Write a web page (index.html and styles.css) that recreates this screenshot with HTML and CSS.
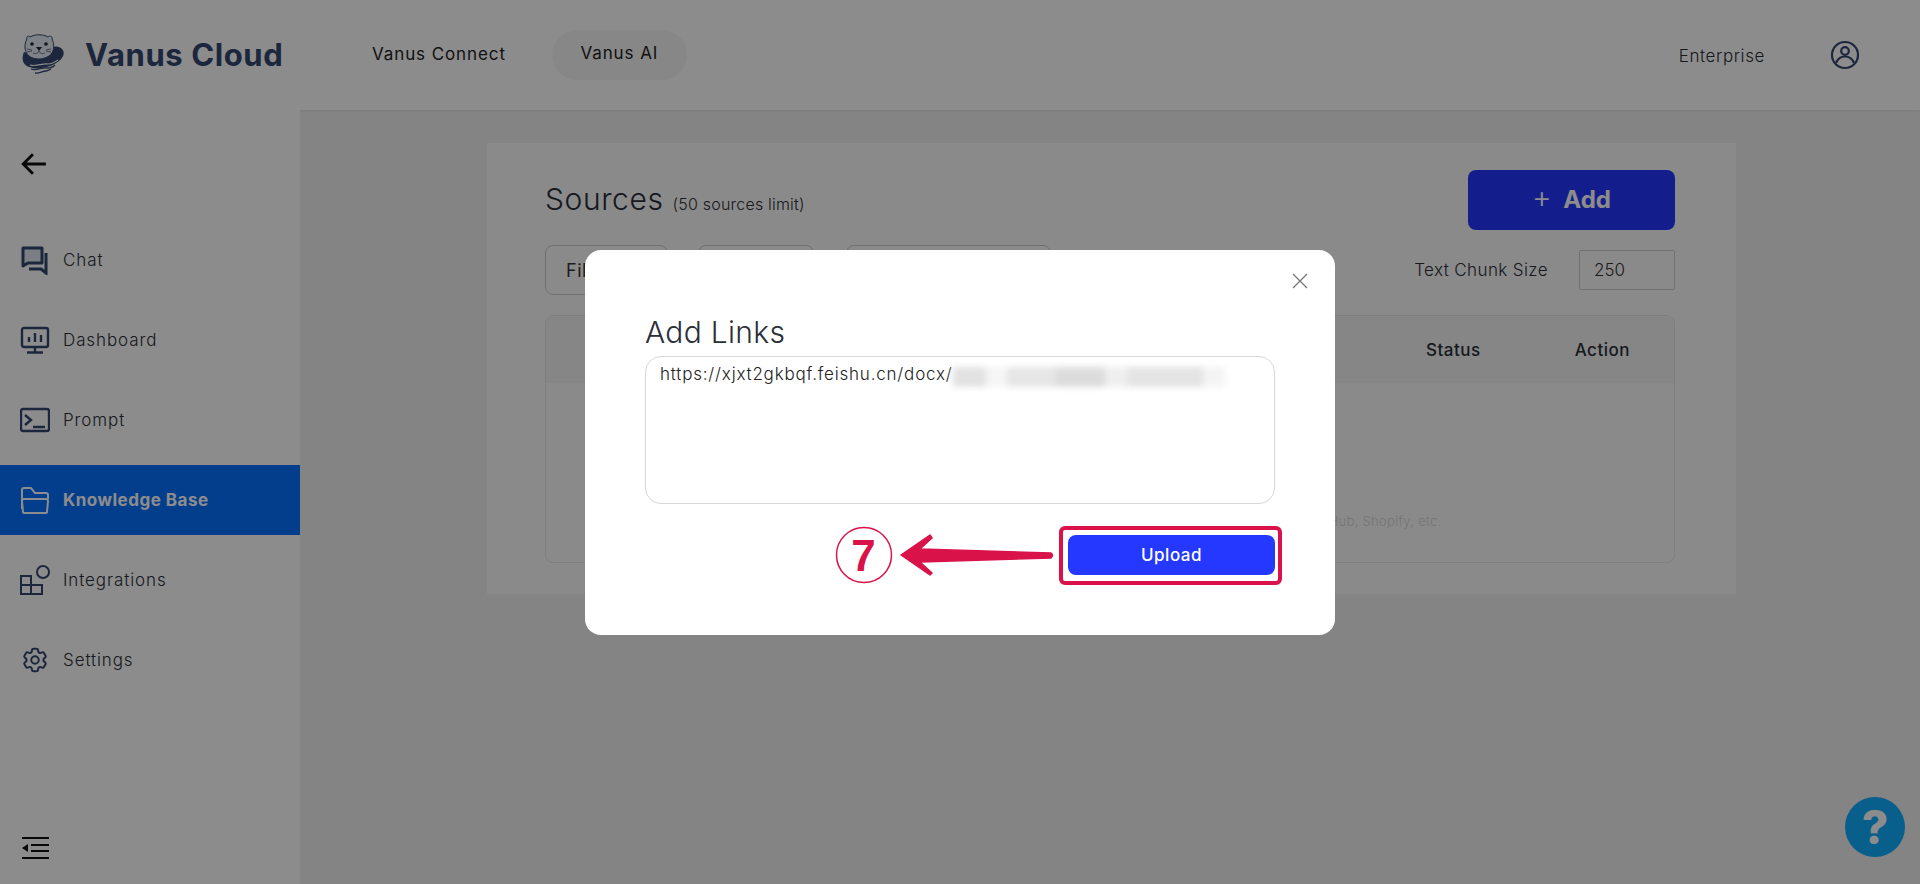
FILE: index.html
```html
<!DOCTYPE html>
<html>
    <head>
        <title>Vanus Cloud</title>
        <link rel="stylesheet" href="styles.css">
    </head>
    <body>
        <header class="topbar">
            <div class="brand">
                <svg class="otter" viewBox="0 0 44 40" width="44" height="40">
                    <path d="M3 18c-3 7-1 13 5 15 10 3 23 0 30-6 5-4 6-9 3-12-2-2-5-3-8-2L18 22z" fill="#33476f"/>
                    <path d="M6 5C5 3 7 1 9 3c5-3 13-3 18 0 2-2 5 0 4 2 3 6 2 14-3 17-6 4-15 4-20 0C3 18 3 10 6 5z" fill="#e6ebf2" stroke="#33476f" stroke-width="1"/>
                    <circle cx="11" cy="10" r="1.800" fill="#1c2740"/>
                    <circle cx="25" cy="10" r="1.800" fill="#1c2740"/>
                    <path d="M15 13h6l-3 4z" fill="#1c2740"/>
                    <path d="M18 17c-1 3-4 3-6 2m6-2c1 3 4 3 6 2M6 15l5 1M6 18l5-1M30 15l-5 1M30 18l-5-1" fill="none" stroke="#33476f" stroke-width=".7"/>
                    <path d="M9 31c7 2 12-2 18-1 4 0 7-2 10-4" fill="none" stroke="#fff" stroke-width="1.200"/>
                    <path d="M10 35c6 2 11-2 16-1 3 0 6-1 8-3M14 39c4 1 7-2 11-2 2 0 3-1 5-2" fill="none" stroke="#33476f" stroke-width="1.300"/>
                </svg>
                <span class="brand-name">Vanus Cloud</span>
            </div>
            <nav class="topnav">
                <a class="topnav-item">Vanus Connect</a>
                <a class="topnav-item topnav-active">Vanus AI</a>
            </nav>
            <div class="account">
                <span class="plan">Enterprise</span>
                <svg viewBox="0 0 30 30" width="30" height="30" fill="none" stroke="#33476f" stroke-width="2.200">
                    <circle cx="15" cy="15" r="13"/>
                    <circle cx="15" cy="11" r="3.800"/>
                    <path d="M6 23c2-5 5-6.500 9-6.500s7 1.500 9 6.500"/>
                </svg>
            </div>
        </header>

        <div class="layout">
            <aside class="sidebar">
                <div class="back">
                    <svg viewBox="0 0 24 24" width="26" height="26" fill="none" stroke="#111" stroke-width="2.600">
                        <path d="M23 12H2M11 3l-9 9 9 9"/>
                    </svg>
                </div>
                <ul class="menu">
                    <li class="menu-item">
                        <svg class="menu-icon" viewBox="0 0 30 30">
                            <path d="M3 3h19v15H8l-5 3z" fill="#dfe6f2" stroke="#33476f" stroke-width="3" stroke-linejoin="round"/>
                            <path d="M26 8v20l-5-4H9" fill="none" stroke="#33476f" stroke-width="3"/>
                        </svg>
                        Chat
                    </li>
                    <li class="menu-item">
                        <svg class="menu-icon" viewBox="0 0 30 30" fill="none" stroke="#33476f" stroke-width="2.400">
                            <rect x="2" y="3" width="26" height="19" rx="2"/>
                            <path d="M15 22v5M7 27.500h16M9 17v-5M15 17V8M21 17v-7"/>
                        </svg>
                        Dashboard
                    </li>
                    <li class="menu-item">
                        <svg class="menu-icon" viewBox="0 0 30 30" fill="none" stroke="#33476f" stroke-width="2.400">
                            <rect x="1" y="4" width="28" height="22" rx="2"/>
                            <path d="M5 10l6 5-6 5M13 22h12"/>
                        </svg>
                        Prompt
                    </li>
                    <li class="menu-item menu-active">
                        <svg class="menu-icon" viewBox="0 0 30 30" fill="none" stroke="#fff" stroke-width="2">
                            <path d="M2 24V5q0-2 2-2h7l4 5h11q2 0 2 2v4"/>
                            <path d="M2 16q0-2 2-2h22q2 0 2 2l-1 11q0 1-2 1H5q-2 0-2-1z"/>
                        </svg>
                        Knowledge Base
                    </li>
                    <li class="menu-item">
                        <svg class="menu-icon" viewBox="0 0 30 30" fill="none" stroke="#33476f" stroke-width="2">
                            <path d="M1 11h10v18H1zM1 20h21v9H11"/>
                            <circle cx="23" cy="7" r="6"/>
                        </svg>
                        Integrations
                    </li>
                    <li class="menu-item">
                        <svg class="menu-icon" viewBox="0 0 24 24" fill="none" stroke="#33476f" stroke-width="1.600">
                            <path d="M9.594 3.94c.09-.542.56-.94 1.11-.94h2.593c.55 0 1.02.398 1.11.94l.213 1.281c.063.374.313.686.645.87.074.04.147.083.22.127.324.196.72.257 1.075.124l1.217-.456a1.125 1.125 0 011.37.49l1.296 2.247a1.125 1.125 0 01-.26 1.431l-1.003.827c-.293.24-.438.613-.431.992a6.759 6.759 0 010 .255c-.007.378.138.75.43.99l1.005.828c.424.35.534.954.26 1.43l-1.298 2.247a1.125 1.125 0 01-1.369.491l-1.217-.456c-.355-.133-.75-.072-1.076.124a6.57 6.57 0 01-.22.128c-.331.183-.581.495-.644.869l-.213 1.28c-.09.543-.56.941-1.11.941h-2.594c-.55 0-1.02-.398-1.11-.94l-.213-1.281c-.062-.374-.312-.686-.644-.87a6.52 6.52 0 01-.22-.127c-.325-.196-.72-.257-1.076-.124l-1.217.456a1.125 1.125 0 01-1.369-.49l-1.297-2.247a1.125 1.125 0 01.26-1.431l1.004-.827c.292-.24.437-.613.43-.992a6.932 6.932 0 010-.255c.007-.378-.138-.75-.43-.99l-1.004-.828a1.125 1.125 0 01-.26-1.43l1.297-2.247a1.125 1.125 0 011.37-.491l1.216.456c.356.133.751.072 1.076-.124.072-.044.146-.087.22-.128.332-.183.582-.495.644-.869l.214-1.281z"/>
                            <circle cx="12" cy="12" r="3"/>
                        </svg>
                        Settings
                    </li>
                </ul>
                <div class="collapse">
                    <svg viewBox="0 0 30 26" width="30" height="26" fill="none" stroke="#111" stroke-width="2.200">
                        <path d="M2 3h27M11 10h18M11 16h18M2 23h27"/>
                        <path d="M2 13l6-4v8z" fill="#111" stroke="none"/>
                    </svg>
                </div>
            </aside>

            <main class="content">
                <section class="card">
                    <div class="card-head">
                        <h1 class="card-title">Sources <small>(50 sources limit)</small></h1>
                        <button class="add-btn"><span class="plus">+</span> Add</button>
                    </div>
                    <div class="toolbar">
                        <button class="tab tab-file">Files</button>
                        <button class="tab tab-link">Links</button>
                        <button class="tab tab-site">Website</button>
                        <label class="chunk">Text Chunk Size <input class="chunk-input" value="250"></label>
                    </div>
                    <div class="table">
                        <div class="table-head">
                            <span class="col-status">Status</span>
                            <span class="col-action">Action</span>
                        </div>
                        <p class="table-empty">You can add sources from local files, links and websites, or connect Notion, Feishu, GitHub, Shopify, etc.</p>
                    </div>
                </section>
            </main>
        </div>

        <a class="help">?</a>

        <div class="overlay">
            <div class="modal">
                <svg class="modal-close" viewBox="0 0 16 16" width="16" height="16" fill="none" stroke="#777" stroke-width="1.300">
                    <path d="M1 1l14 14M15 1L1 15"/>
                </svg>
                <h2 class="modal-title">Add Links</h2>
                <div class="links-box">https://xjxt2gkbqf.feishu.cn/docx/<span class="redacted"></span></div>
                <div class="modal-foot">
                    <svg class="callout" viewBox="0 0 219 66" width="219" height="66">
                        <circle cx="29" cy="32" r="27.500" fill="none" stroke="#d9134a" stroke-width="1.500"/>
                        <text x="29" y="48" class="callout-num">7</text>
                        <path d="M66 32L95 12l2 3-12 11 131 4q3 2 0 5L85 39l12 11-2 2z" fill="#d9134a" stroke="#d9134a" stroke-width="1.500" stroke-linejoin="round"/>
                    </svg>
                    <div class="upload-frame">
                        <button class="upload-btn">Upload</button>
                    </div>
                </div>
            </div>
        </div>
    </body>
</html>
```

FILE: styles.css
```css
*{
    box-sizing: border-box;
}
body{
    margin: 0;
    height: 884px;
    overflow: hidden;
    font-family: "Inter", "Open Sans", sans-serif;
    font-size: 17px;
    letter-spacing: .9px;
    color: #2b2f38;
    background: #f0f0f0;
}

/* header */
.topbar{
    display: flex;
    align-items: center;
    height: 110px;
    background: #fff;
    box-shadow: 0 1px 2px rgba(0, 0, 0, .06);
}
.brand{
    display: flex;
    align-items: center;
    width: 372px;
    padding: 0 0 2px 21px;
    gap: 20px;
}
.brand-name{
    font-size: 31px;
    font-weight: 700;
    letter-spacing: .6px;
    color: #33476f;
}
.topnav{
    display: flex;
    align-items: center;
    gap: 46px;
}
.topnav-item{
    color: #222;
    padding-bottom: 3px;
}
.topnav-active{
    width: 135px;
    height: 50px;
    line-height: 47px;
    text-align: center;
    background: #f6f6f6;
    border-radius: 25px;
}
.account{
    margin-left: auto;
    display: flex;
    align-items: center;
    gap: 65px;
    padding-right: 60px;
}
.plan{
    padding-top: 2px;
    font-weight: 300;
    letter-spacing: .6px;
}

/* sidebar */
.layout{
    display: flex;
    height: 774px;
}
.sidebar{
    display: flex;
    flex-direction: column;
    width: 300px;
    background: #fff;
}
.back{
    height: 110px;
    padding: 41px 0 0 21px;
}
.menu{
    list-style: none;
    margin: 0;
    padding: 0;
}
.menu-item{
    display: flex;
    align-items: center;
    gap: 13px;
    height: 80px;
    padding-left: 20px;
    font-weight: 300;
}
.menu-icon{
    width: 30px;
    height: 30px;
    flex-shrink: 0;
}
.menu-active{
    height: 70px;
    margin: 5px 0;
    background: #0671ff;
    color: #fff;
    font-weight: 700;
    letter-spacing: .5px;
}
.collapse{
    margin-top: auto;
    padding: 0 0 19px 20px;
}

/* main */
.content{
    flex: 1;
    padding: 33px 184px 0 187px;
}
.card{
    height: 451px;
    padding: 27px 61px 0 58px;
    background: #fcfcfc;
}
.card-head{
    display: flex;
    justify-content: space-between;
    align-items: center;
    height: 60px;
}
.card-title{
    margin: 0 0 2px;
    font-size: 30px;
    font-weight: 300;
    letter-spacing: .6px;
}
.card-title small{
    font-size: 16px;
    letter-spacing: .2px;
}
.add-btn{
    width: 207px;
    height: 60px;
    padding-bottom: 7px;
    border: none;
    border-radius: 8px;
    background: #2438ff;
    color: #fff;
    font: 700 24px "Inter", sans-serif;
}
.plus{
    font-weight: 300;
    font-size: 30px;
    margin-right: 6px;
}
.toolbar{
    display: flex;
    align-items: flex-start;
    height: 50px;
    margin-top: 15px;
}
.tab{
    height: 50px;
    padding: 0 20px;
    text-align: left;
    background: none;
    border: 1px solid #ccc;
    border-radius: 8px;
    font: 18px "Inter", sans-serif;
    letter-spacing: .5px;
    color: #333;
}
.tab-file{
    width: 123px;
    margin-right: 30px;
}
.tab-link{
    width: 116px;
    margin-right: 32px;
}
.tab-site{
    width: 205px;
}
.chunk{
    margin-left: auto;
    display: flex;
    align-items: center;
    gap: 31px;
    height: 40px;
    margin-top: 5px;
    font-weight: 300;
    letter-spacing: .4px;
}
.chunk-input{
    width: 96px;
    height: 40px;
    padding: 0 14px;
    border: 1px solid #ccc;
    border-radius: 2px;
    background: none;
    font: 300 17px "Inter", sans-serif;
    color: #333;
}
.table{
    height: 248px;
    margin-top: 20px;
    border: 1px solid #e4e6e6;
    border-radius: 8px;
    overflow: hidden;
}
.table-head{
    display: flex;
    height: 67px;
    align-items: center;
    justify-content: flex-end;
    background: #f4f5f5;
    padding-right: 44px;
    font-weight: 500;
    letter-spacing: .5px;
}
.col-status{
    margin-right: 94px;
}
.table-empty{
    margin: 130px 0 0;
    text-align: center;
    white-space: nowrap;
    font-size: 13px;
    font-weight: 300;
    letter-spacing: .3px;
    color: #d4d4d4;
}

.help{
    position: absolute;
    left: 1845px;
    top: 797px;
    width: 60px;
    height: 60px;
    border-radius: 50%;
    background: #12aeff;
    color: #fff;
    font-size: 46px;
    font-weight: 800;
    line-height: 60px;
    text-align: center;
    letter-spacing: 0;
}

/* modal */
.overlay{
    position: fixed;
    top: 0;
    left: 0;
    width: 100%;
    height: 100%;
    display: flex;
    align-items: center;
    justify-content: center;
    background: rgba(0, 0, 0, .45);
}
.modal{
    position: relative;
    width: 750px;
    height: 385px;
    padding: 63px 60px 0;
    background: #fff;
    border-radius: 16px;
}
.modal-close{
    position: absolute;
    top: 23px;
    right: 27px;
}
.modal-title{
    margin: 0;
    font-size: 30px;
    font-weight: 300;
    line-height: 38px;
    letter-spacing: .3px;
}
.links-box{
    height: 148px;
    margin-top: 5px;
    padding: 7px 14px;
    border: 1px solid #d8d8d8;
    border-radius: 16px;
    font-weight: 300;
    letter-spacing: .8px;
    color: #222;
}
.redacted{
    display: inline-block;
    vertical-align: top;
    width: 272px;
    height: 20px;
    margin: 3px 0 0 1px;
    background: linear-gradient(90deg, #e2e2e2 0 12%, #f6f6f6 12% 20%, #e6e6e6 20% 38%, #dcdcdc 38% 56%, #efefef 56% 64%, #e4e4e4 64% 92%, #f4f4f4 92%);
    filter: blur(3px);
}
.modal-foot{
    display: flex;
    justify-content: flex-end;
    align-items: center;
    margin: 19px -7px 0 0;
}
.callout{
    margin-right: 5px;
}
.callout-num{
    font: 900 44px "Liberation Sans", sans-serif;
    fill: #d9134a;
    text-anchor: middle;
}
.upload-frame{
    padding: 5px 3px 6px 5px;
    border: 4px solid #d9134a;
    border-radius: 6px;
}
.upload-btn{
    display: block;
    width: 207px;
    height: 40px;
    border: none;
    border-radius: 8px;
    background: #2438ff;
    color: #fff;
    font: 500 17px "Inter", sans-serif;
    letter-spacing: .5px;
}
```
